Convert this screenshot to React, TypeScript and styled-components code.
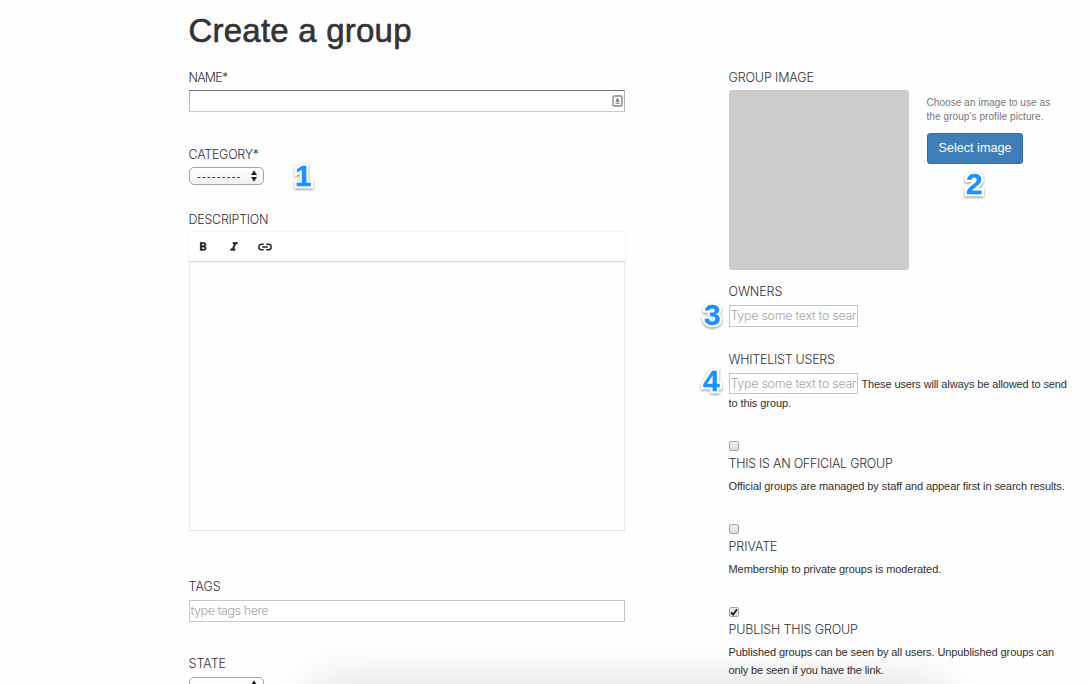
import React from 'react';
import styled, { createGlobalStyle } from 'styled-components';

const GlobalStyle = createGlobalStyle`
  * { box-sizing: border-box; }
  body { margin: 0; background: #fff; overflow: hidden; }
`;

const Page = styled.main`
  position: relative;
  width: 1090px;
  height: 684px;
  overflow: hidden;
  padding: 0 0 0 189px;
  background: #fefefe;
  color: #333;
  font-family: 'Liberation Sans', Arial, sans-serif;
`;

const Title = styled.h1`
  margin: 0;
  height: 68px;
  padding-top: 11px;
  font-size: 33px;
  line-height: 40px;
  font-weight: 400;
  letter-spacing: 0.22px;
  text-indent: -0.5px;
  -webkit-text-stroke: 0.6px #333;
`;

const Columns = styled.div`
  display: grid;
  grid-template-columns: 436px 350px;
  column-gap: 104px;
`;

const Field = styled.section<{ $height: number }>`
  height: ${(p) => p.$height}px;
`;

const Label = styled.label<{ $track?: number; $gap?: number }>`
  display: block;
  height: 20px;
  margin: 0 0 ${(p) => p.$gap ?? 2}px -0.5px;
  line-height: 20px;
  font-size: 12.5px;
  font-family: Inter, 'Liberation Sans', sans-serif;
  font-weight: 300;
  white-space: nowrap;
  letter-spacing: ${(p) => p.$track ?? -0.26}px;
`;

const TextInput = styled.input<{ $height?: number; $track?: number }>`
  display: block;
  width: 100%;
  height: ${(p) => p.$height ?? 22}px;
  padding: 0 1px ${(p) => (p.$height ? 0 : 2)}px;
  border: 1px solid #c6c6c6;
  border-radius: 0;
  outline: 0;
  background: #fff;
  font: 300 12.5px Inter, 'Liberation Sans', sans-serif;
  letter-spacing: ${(p) => p.$track ?? -0.3}px;
  text-indent: -0.5px;
  &::placeholder { color: #a6a6a6; opacity: 1; }
`;

const NameBox = styled.div`
  display: flex;
  align-items: center;
  justify-content: flex-end;
  height: 22px;
  padding-right: 1.5px;
  border: 1px solid #b5b5b5;
  border-top-color: #777;
  border-bottom-color: #ccc;
  background: #fff;
`;

const SelectBox = styled.div`
  display: flex;
  align-items: center;
  justify-content: space-between;
  width: 75px;
  height: 18px;
  padding: 0 5px 0 7px;
  border: 1px solid #a3a3a3;
  border-radius: 5px;
  background: linear-gradient(#fff, #f1f1f1);
  font-size: 11px;
  line-height: 16px;
  letter-spacing: 1.3px;
  color: #222;
`;

const Editor = styled.div`
  height: 299px;
  display: flex;
  flex-direction: column;
`;

const Toolbar = styled.div`
  display: flex;
  align-items: center;
  gap: 17px;
  height: 30px;
  padding-left: 7px;
  border-bottom: 1px solid #d8d8d8;
  box-shadow: 0 0 2px rgba(0, 0, 0, 0.13);
  background: #fff;
`;

const EditArea = styled.div`
  flex: 1;
  border: 1px solid #e8e8e8;
  border-top: 0;
`;

const ImageRow = styled.div`
  display: flex;
  gap: 18px;
`;

const ImageBox = styled.div`
  width: 180px;
  height: 180px;
  border-radius: 3px;
  background: #ccc;
`;

const ImageSide = styled.div`
  padding-top: 6px;
`;

const Hint = styled.p`
  margin: 0 0 9px -0.5px;
  font-size: 10px;
  line-height: 14px;
  color: #777;
  white-space: nowrap;
  letter-spacing: 0.08px;
`;

const Button = styled.button`
  display: block;
  width: 96px;
  height: 31px;
  padding: 0 0 2px;
  border: 1px solid #326ea5;
  border-radius: 3px;
  background: #3e7db5;
  color: #fff;
  font: 12.6px 'Liberation Sans', Arial, sans-serif;
`;

const SearchRow = styled.div`
  display: flex;
  align-items: center;
  gap: 4px;
  input { width: 129px; flex: none; }
`;

const Line = styled.span<{ $track?: number }>`
  display: block;
  margin-left: -0.5px;
  font-size: 11px;
  line-height: 18px;
  color: #303030;
  letter-spacing: ${(p) => p.$track ?? -0.08}px;
  white-space: nowrap;
`;

const Help = styled.p`
  margin: 0;
  padding-top: 1px;
`;

const Check = styled.span`
  display: flex;
  align-items: center;
  justify-content: center;
  width: 10px;
  height: 10px;
  margin-bottom: 3px;
  border: 1px solid #a5a5a5;
  border-radius: 2px;
  background: linear-gradient(#f0f0f0, #dcdcdc);
  svg { flex: none; }
`;

const Marker = styled.span<{ $x: number; $y: number }>`
  position: absolute;
  left: ${(p) => p.$x}px;
  top: ${(p) => p.$y}px;
  font-size: 30px;
  line-height: 30px;
  font-weight: 700;
  color: #1e90ff;
  filter: drop-shadow(0 1.5px 1px rgba(0, 0, 0, 0.45));
  -webkit-text-stroke: 5px #fff;
  &::after {
    content: attr(data-digit);
    position: absolute;
    left: 0;
    top: 0;
    -webkit-text-stroke: 0.3px #1e90ff;
  }
`;

const BottomShadow = styled.div`
  position: absolute;
  left: 314px;
  top: 688px;
  width: 628px;
  height: 100px;
  box-shadow: 0 0 54px rgba(0, 0, 0, 0.165);
  pointer-events: none;
`;

const Arrows = () => (
  <svg width="8" height="12" viewBox="0 0 8 12" fill="#222">
    <path d="M4 .3 7 5H1zM4 11.700 1 7h6z" />
  </svg>
);

const BoldIcon = () => (
  <svg width="14" height="14" viewBox="0 0 24 24" fill="#222" stroke="#222" strokeWidth=".5">
    <path d="M15.6 10.79c.97-.67 1.65-1.77 1.65-2.79 0-2.26-1.75-4-4-4H7v14h7.04c2.09 0 3.71-1.7 3.71-3.79 0-1.52-.86-2.82-2.15-3.42zM10 6.5h3c.83 0 1.5.67 1.5 1.5s-.67 1.5-1.5 1.5h-3v-3zm3.5 9H10v-3h3.5c.83 0 1.5.67 1.5 1.5s-.67 1.5-1.5 1.5z" />
  </svg>
);

const ItalicIcon = () => (
  <svg width="14" height="14" viewBox="0 0 24 24" fill="#222" stroke="#222" strokeWidth=".5">
    <path d="M10 4v3h2.210l-3.420 8H6v3h8v-3h-2.210l3.420-8H18V4z" />
  </svg>
);

const LinkIcon = () => (
  <svg width="14" height="14" viewBox="0 0 14 14" fill="none" stroke="#222" strokeWidth="1.4">
    <path d="M5.700 4.300H3.500a2.700 2.700 0 0 0 0 5.400h2.200M8.300 4.300h2.200a2.700 2.700 0 0 1 0 5.400H8.300M4.300 7h5.400" />
  </svg>
);

const ContactIcon = () => (
  <svg width="11" height="12" viewBox="0 0 11 12" fill="none">
    <rect x="1" y="1" width="9" height="10" rx="1" stroke="#8a8a8a" strokeWidth="1.4" />
    <path d="M5.500 2.500 7.200 6H3.800zM3.500 6.200h4v1h-4zM3.500 8.200h4v.8h-4z" fill="#777" />
  </svg>
);

const Tick = () => (
  <svg width="10" height="10" viewBox="0 0 10 10" fill="none">
    <path d="M2 5.300 4.100 7.500 8 2.200" stroke="#222" strokeWidth="1.9" />
  </svg>
);

const Callout = ({ digit, x, y }: { digit: string; x: number; y: number }) => (
  <Marker $x={x} $y={y} data-digit={digit}>{digit}</Marker>
);

export default function App() {
  return (
    <Page>
      <GlobalStyle />
      <Title>Create a group</Title>
      <Columns>
        <div>
          <Field $height={77}>
            <Label $track={-0.8}>NAME*</Label>
            <NameBox><ContactIcon /></NameBox>
          </Field>
          <Field $height={65}>
            <Label>CATEGORY*</Label>
            <SelectBox>---------<Arrows /></SelectBox>
          </Field>
          <Field $height={367}>
            <Label>DESCRIPTION</Label>
            <Editor>
              <Toolbar><BoldIcon /><ItalicIcon /><LinkIcon /></Toolbar>
              <EditArea />
            </Editor>
          </Field>
          <Field $height={77}>
            <Label $gap={3} $track={0}>TAGS</Label>
            <TextInput $track={-0.42} placeholder="type tags here" />
          </Field>
          <Field $height={40}>
            <Label $gap={3} $track={0}>STATE</Label>
            <SelectBox><span /><Arrows /></SelectBox>
          </Field>
        </div>
        <div>
          <Field $height={214}>
            <Label $track={-0.12}>GROUP IMAGE</Label>
            <ImageRow>
              <ImageBox />
              <ImageSide>
                <Hint>Choose an image to use as<br />the group's profile picture.</Hint>
                <Button>Select image</Button>
              </ImageSide>
            </ImageRow>
          </Field>
          <Field $height={68}>
            <Label $gap={3} $track={-0.1}>OWNERS</Label>
            <SearchRow><TextInput placeholder="Type some text to search" /></SearchRow>
          </Field>
          <Field $height={91}>
            <Label $gap={3}>WHITELIST USERS</Label>
            <SearchRow>
              <TextInput $height={21} placeholder="Type some text to search" />
              <Line $track={-0.12}>These users will always be allowed to send</Line>
            </SearchRow>
            <Line>to this group.</Line>
          </Field>
          <Field $height={83}>
            <Check />
            <Label>THIS IS AN OFFICIAL GROUP</Label>
            <Help><Line>Official groups are managed by staff and appear first in search results.</Line></Help>
          </Field>
          <Field $height={83}>
            <Check />
            <Label $track={-0.05}>PRIVATE</Label>
            <Help><Line $track={-0.06}>Membership to private groups is moderated.</Line></Help>
          </Field>
          <Field $height={80}>
            <Check><Tick /></Check>
            <Label $track={-0.14}>PUBLISH THIS GROUP</Label>
            <Help>
              <Line $track={-0.09}>Published groups can be seen by all users. Unpublished groups can</Line>
              <Line $track={-0.13}>only be seen if you have the link.</Line>
            </Help>
          </Field>
        </div>
      </Columns>
      <Callout digit="1" x={295} y={161} />
      <Callout digit="2" x={966} y={169} />
      <Callout digit="3" x={704} y={300} />
      <Callout digit="4" x={703} y={366} />
      <BottomShadow />
    </Page>
  );
}
